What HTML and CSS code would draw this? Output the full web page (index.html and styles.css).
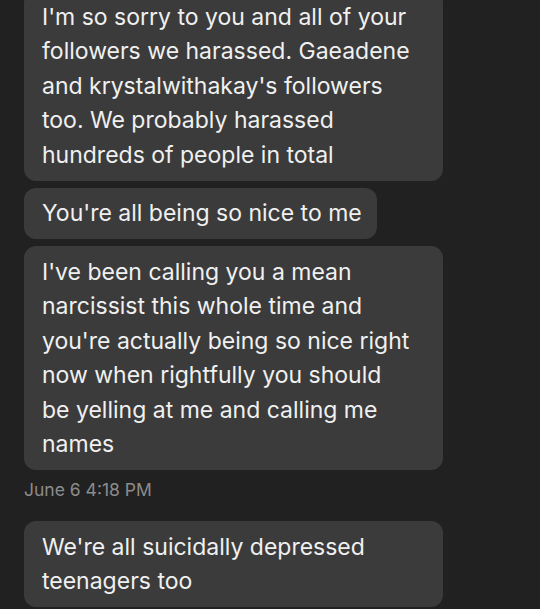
FILE: index.html
```html
<!DOCTYPE html>
<html>
<head>
    <link rel="stylesheet" href="styles.css">
</head>
<body>
    <div class="thread">
        <div class="msg first">I'm so sorry to you and all of your followers we harassed. Gaeadene and krystalwithakay's followers too. We probably harassed hundreds of people in total</div>
        <div class="msg short">You're all being so nice to me</div>
        <div class="msg">I've been calling you a mean narcissist this whole time and you're actually being so nice right now when rightfully you should be yelling at me and calling me names</div>
        <div class="time">June 6 4:18 PM</div>
        <div class="msg">We're all suicidally depressed teenagers too</div>
    </div>
</body>
</html>
```

FILE: styles.css
```css
body {
    margin: 0;
    background-color: #212121;
    font-family: Inter, "Noto Sans", sans-serif;
    color: #f0f0f0;
    overflow: hidden;
}
.thread {
    display: flex;
    flex-direction: column;
    align-items: flex-start;
    gap: 7px;
    padding: 0 24px;
}
.msg {
    box-sizing: border-box;
    max-width: 419px;
    background-color: #3b3b3b;
    border-radius: 12px;
    padding: 8.5px 32px 8.5px 18px;
    font-size: 23px;
    line-height: 34.5px;
}
.msg.first {
    margin-top: -9px;
}
.msg.short {
    padding-right: 15px;
}
.time {
    color: #8c8c8c;
    font-size: 17.5px;
    line-height: 20px;
    margin: 3px 0 14px;
}
```
